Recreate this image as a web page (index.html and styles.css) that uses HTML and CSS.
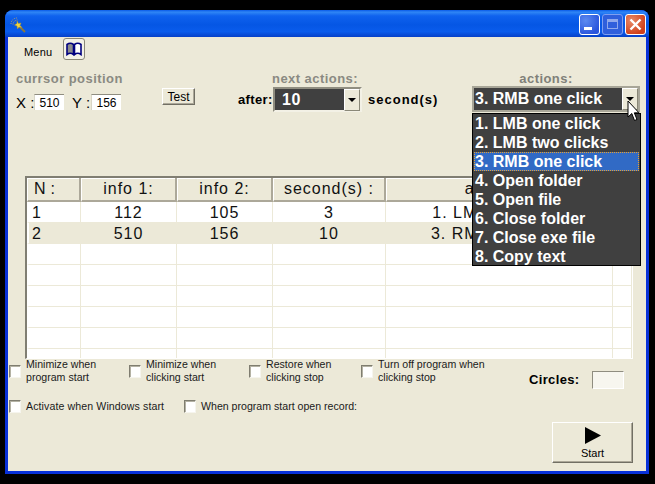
FILE: index.html
```html
<!DOCTYPE html>
<html lang="en">
<head>
<meta charset="utf-8">
<title>Clicker</title>
<link rel="stylesheet" href="styles.css">
</head>
<body>
<div class="window">
  <header class="titlebar">
    <svg class="app-icon" width="16" height="16" viewBox="0 0 16 16">
      <path d="M1 7A6 6 0 0 1 7 1M3 7.500A4.500 4.500 0 0 1 7.500 3" fill="none" stroke="#b9a16a" stroke-width="1" stroke-dasharray="1 1"/>
      <path d="M9 9L15 15" stroke="#8a7a40" stroke-width="2"/>
      <path d="M7 4L8.500 6.500L11 6L10 8.500L12 10.500L9 10L7.500 12L7 9L4.500 8L7 6.500Z" fill="#f2d640" stroke="#a89030" stroke-width=".5"/>
    </svg>
    <div class="caption-buttons">
      <div class="cap cap-min"><span class="min-glyph"></span></div>
      <div class="cap cap-max"><span class="max-glyph"></span></div>
      <div class="cap cap-close">
        <svg width="15" height="15" viewBox="0 0 15 15"><path d="M2.500 2.500L12.500 12.500M12.500 2.500L2.500 12.500" stroke="#fff" stroke-width="2.400"/></svg>
      </div>
    </div>
  </header>

  <main class="client">
    <div class="menu-row">
      <span class="menu-item">Menu</span>
      <div class="book-btn">
        <svg width="16" height="14" viewBox="0 0 16 14">
          <path d="M1 2.500C3 1 5.500 1 7.500 2.500V12.500C5.500 11 3 11 1 12.500Z" fill="#8c8c8c" stroke="#00007f" stroke-width="1.600"/>
          <path d="M8.500 2.500C10.500 1 13 1 15 2.500V12.500C13 11 10.500 11 8.500 12.500Z" fill="#fff" stroke="#00007f" stroke-width="1.600"/>
        </svg>
      </div>
    </div>

    <div class="control-row">
      <section class="position-group">
        <div class="group-label">currsor position</div>
        <div class="coords">
          <span class="coord-name">X :</span><span class="coord-value">510</span>
          <span class="coord-name coord-y">Y :</span><span class="coord-value">156</span>
        </div>
      </section>
      <button class="test-btn">Test</button>
      <section class="next-group">
        <div class="group-label next-label">next actions:</div>
        <div class="next-line">
          <span class="bold-label">after:</span>
          <div class="combo combo-next">
            <span class="combo-text">10</span>
            <span class="combo-btn"><i class="arrow"></i></span>
          </div>
          <span class="bold-label seconds">second(s)</span>
        </div>
      </section>
      <section class="actions-group">
        <div class="group-label actions-label">actions:</div>
        <div class="combo combo-actions">
          <span class="combo-text">3. RMB one click</span>
          <span class="combo-btn"><i class="arrow"></i></span>
        </div>
      </section>
    </div>

    <div class="table-frame">
      <table class="grid">
        <colgroup>
          <col class="c-n"><col class="c-i"><col class="c-i"><col class="c-s"><col class="c-a"><col class="c-e">
        </colgroup>
        <thead>
          <tr><th class="left">N :</th><th>info 1:</th><th>info 2:</th><th>second(s) :</th><th>actions :</th><th></th></tr>
        </thead>
        <tbody>
          <tr><td class="left">1</td><td>112</td><td>105</td><td>3</td><td>1. LMB one click</td><td></td></tr>
          <tr class="alt"><td class="left">2</td><td>510</td><td>156</td><td>10</td><td>3. RMB one click</td><td></td></tr>
          <tr><td></td><td></td><td></td><td></td><td></td><td></td></tr>
          <tr><td></td><td></td><td></td><td></td><td></td><td></td></tr>
          <tr><td></td><td></td><td></td><td></td><td></td><td></td></tr>
          <tr><td></td><td></td><td></td><td></td><td></td><td></td></tr>
          <tr><td></td><td></td><td></td><td></td><td></td><td></td></tr>
          <tr><td></td><td></td><td></td><td></td><td></td><td></td></tr>
        </tbody>
      </table>
    </div>

    <div class="options-row">
      <label class="opt opt-1"><span class="check"></span><span>Minimize when<br>program start</span></label>
      <label class="opt opt-2"><span class="check"></span><span>Minimize when<br>clicking start</span></label>
      <label class="opt opt-3"><span class="check"></span><span>Restore when<br>clicking stop</span></label>
      <label class="opt opt-4"><span class="check"></span><span>Turn off program when<br>clicking stop</span></label>
      <div class="circles"><span class="bold-label">Circles:</span><span class="circles-input"></span></div>
    </div>

    <div class="options-row-2">
      <label class="opt opt-5"><span class="check"></span><span>Activate when Windows start</span></label>
      <label class="opt"><span class="check"></span><span>When program start open record:</span></label>
    </div>

    <div class="start-row">
      <button class="start-btn">
        <svg width="16" height="17" viewBox="0 0 16 17"><path d="M0 0L16 8.500L0 17Z" fill="#000"/></svg>
        <span>Start</span>
      </button>
    </div>

    <ul class="dropdown">
      <li>1. LMB one click</li>
      <li>2. LMB two clicks</li>
      <li class="selected">3. RMB one click</li>
      <li>4. Open folder</li>
      <li>5. Open file</li>
      <li>6. Close folder</li>
      <li>7. Close exe file</li>
      <li>8. Copy text</li>
    </ul>
    <svg class="cursor" width="13" height="22" viewBox="0 0 13 22">
      <path d="M1 1V17L4.800 13.500L7.500 20.500L10 19.500L7.300 12.800H12Z" fill="#fff" stroke="#000" stroke-width="1"/>
    </svg>
  </main>
</div>
</body>
</html>
```

FILE: styles.css
```css
* { box-sizing: border-box; }

html, body {
  margin: 0;
  height: 100%;
  background: #000;
}

body {
  padding: 10px 6px 10px 5px;
  overflow: hidden;
  font-family: "Liberation Sans", Arial, sans-serif;
  color: #000;
}

.window {
  width: 644px;
  height: 464px;
  display: flex;
  flex-direction: column;
  background: #0831d9;
  border-radius: 8px 8px 0 0;
  overflow: hidden;
}

.titlebar {
  height: 27px;
  flex: none;
  display: flex;
  align-items: center;
  justify-content: space-between;
  padding: 0 3px 0 5px;
  background: linear-gradient(180deg, #0a5ae8 0%, #2f86f5 8%, #0f62ee 22%, #0556e4 55%, #0a5cec 80%, #0640c8 100%);
}

.app-icon { margin-top: 2px; }

.caption-buttons {
  display: flex;
  gap: 2px;
  margin-top: 1px;
}

.cap {
  width: 21px;
  height: 21px;
  border: 1px solid #fff;
  border-radius: 3px;
  position: relative;
  display: flex;
  align-items: center;
  justify-content: center;
}

.cap-min { background: radial-gradient(circle at 30% 30%, #5c8af0, #2a55dc 75%); }
.cap-max { background: #2f5fdc; border-color: #7f9ff0; }
.cap-close { background: radial-gradient(circle at 30% 30%, #e88a68, #d0401a 75%); }

.min-glyph {
  width: 8px;
  height: 3px;
  background: #fff;
  margin: 9px 4px 0 0;
}

.max-glyph {
  width: 11px;
  height: 10px;
  border: 1px solid #8fa8ec;
  border-top-width: 3px;
}

.client {
  position: relative;
  flex: 1;
  margin: 0 3px 3px;
  background: #ece9d8;
  display: flex;
  flex-direction: column;
}

.menu-row {
  height: 23px;
  display: flex;
  align-items: center;
  flex: none;
  padding-left: 16px;
  font-size: 11px;
}

.menu-item { margin-top: 6px; letter-spacing: .2px; }

.book-btn {
  width: 22px;
  height: 22px;
  margin: 1px 0 0 11px;
  border: 1px solid #8a8878;
  border-radius: 3px;
  background: #f3f1e6;
  display: flex;
  align-items: center;
  justify-content: center;
}

.control-row {
  display: flex;
  height: 105px;
  margin-top: 11px;
  padding-left: 8px;
  flex: none;
}

.group-label {
  font-size: 13px;
  font-weight: bold;
  color: #8a8a82;
  letter-spacing: .45px;
  line-height: 16px;
  height: 16px;
}

.position-group { width: 146px; flex: none; }

.coords {
  display: flex;
  align-items: center;
  margin-top: 7px;
  height: 16px;
}

.coord-name {
  font-size: 15px;
  width: 18px;
  flex: none;
  white-space: nowrap;
  padding-top: 1px;
}

.coord-y { width: 19px; margin-left: 8px; }

.coord-value {
  width: 30px;
  height: 16px;
  flex: none;
  background: #fff;
  border-top: 1px solid #8f8d80;
  border-left: 1px solid #d8d5c6;
  font-size: 12px;
  line-height: 16px;
  text-align: center;
}

.test-btn {
  width: 33px;
  height: 17px;
  margin: 17px 0 0 0;
  padding: 0;
  font: 12px/14px "Liberation Sans", Arial, sans-serif;
  color: #000;
  background: #ece9d8;
  border: 1px solid;
  border-color: #fff #716f64 #716f64 #fff;
  box-shadow: inset -1px -1px 0 #aca899;
}

.next-group {
  width: 223px;
  margin-left: 43px;
  flex: none;
}

.next-label {
  padding-left: 34px;
  letter-spacing: .45px;
}

.next-line {
  display: flex;
  align-items: center;
}

.bold-label {
  font-size: 13px;
  font-weight: bold;
  letter-spacing: .35px;
  white-space: nowrap;
}

.seconds { margin-left: 6px; letter-spacing: 1px; }

.next-line .bold-label:first-child { width: 35px; flex: none; }

.combo {
  display: flex;
  background: #404040;
  color: #fff;
  font-size: 16px;
  font-weight: bold;
  align-items: center;
  justify-content: space-between;
}

.combo-next {
  width: 89px;
  height: 25px;
  border: 2px solid;
  border-color: #f3f1e6;
  border-top-color: #8f8d80;
  border-left-color: #8f8d80;
  padding-left: 7px;
  letter-spacing: .5px;
}

.combo-actions {
  width: 168px;
  height: 26px;
  border: 2px solid #a8a698;
  padding-left: 1px;
}

.combo-btn {
  width: 16px;
  height: 22px;
  margin-right: 0;
  background: #ece9d8;
  border: 1px solid;
  border-color: #fff #8a8878 #8a8878 #fff;
  display: flex;
  align-items: center;
  justify-content: center;
  flex: none;
}

.arrow {
  width: 0;
  height: 0;
  border-left: 4px solid transparent;
  border-right: 4px solid transparent;
  border-top: 4px solid #000;
}

.actions-group {
  width: 168px;
  flex: none;
  margin-left: 11px;
}

.actions-label {
  text-align: center;
  height: 15px;
  padding-right: 20px;
  color: #808078;
}

.table-frame {
  height: 183px;
  width: 608px;
  margin-left: 17px;
  flex: none;
  overflow: hidden;
  background: #fff;
  border-style: solid;
  border-width: 2px 1px 1px 2px;
  border-color: #807e72 #fff #fff #807e72;
}

.grid {
  table-layout: fixed;
  border-collapse: separate;
  border-spacing: 0;
  width: 605px;
  font-size: 16px;
  letter-spacing: 1px;
  color: #111;
}

.c-n { width: 54px; }
.c-i { width: 96px; }
.c-s { width: 113px; }
.c-a { width: 227px; }
.c-e { width: 19px; }

.grid th {
  height: 24px;
  padding: 0;
  font-weight: normal;
  background: #ece9d8;
  border-right: 2px solid #aca899;
  border-bottom: 2px solid #aca899;
  border-left: 1px solid #fff;
  box-shadow: inset 0 1px 0 #fff;
  white-space: nowrap;
  overflow: hidden;
}

.grid td {
  height: 21px;
  padding: 1px 0 0;
  text-align: center;
  border-right: 1px solid #ece9d8;
  border-bottom: 1px solid #ece9d8;
  white-space: nowrap;
  overflow: hidden;
}

.grid .left { text-align: left; padding-left: 6px; }
.grid td.left { padding-left: 3px; }
.grid th.left { letter-spacing: .2px; }

.grid td:first-child { border-left: 2px solid #fff; }

.alt td { background: #ece9d8; }
.alt td:first-child { border-left-color: #fff; }

.options-row {
  display: flex;
  height: 26px;
  flex: none;
  margin-top: 1px;
  position: relative;
}

.opt {
  display: flex;
  align-items: center;
  gap: 5px;
  font-size: 10.6px;
  line-height: 13px;
  color: #1a1a1a;
  white-space: nowrap;
}

.options-row .opt { margin-top: -4px; }

.check {
  width: 12px;
  height: 13px;
  flex: none;
  background: #fff;
  border-style: solid;
  border-width: 1px;
  border-color: #7f7d70 #f6f5ee #f6f5ee #7f7d70;
  box-shadow: inset 1px 1px 0 #b4b2a4;
}

.opt-1 { width: 120px; margin-left: 1px; }
.opt-2 { width: 120px; }
.opt-3 { width: 112px; }
.opt-4 { width: 168px; }

.circles {
  display: flex;
  align-items: center;
  margin-top: 10px;
  height: 19px;
}

.circles-input {
  width: 32px;
  height: 18px;
  margin-left: 12px;
  background: #f7f6ef;
  border-style: solid;
  border-width: 1px;
  border-color: #8f8d80 #fff #fff #8f8d80;
}

.options-row-2 {
  display: flex;
  margin-top: 12px;
  height: 16px;
  flex: none;
}

.opt-5 { width: 175px; margin-left: 1px; }
.opt-5 span:last-child { letter-spacing: .1px; }

.start-row {
  display: flex;
  justify-content: flex-end;
  padding-right: 13px;
  margin-top: 8px;
  flex: none;
}

.start-btn {
  width: 81px;
  height: 41px;
  padding: 4px 0 0;
  display: flex;
  flex-direction: column;
  align-items: center;
  gap: 3px;
  font: 11px/13px "Liberation Sans", Arial, sans-serif;
  color: #000;
  background: #ece9d8;
  border: 1px solid;
  border-color: #fff #716f64 #716f64 #fff;
  box-shadow: inset -1px -1px 0 #aca899;
}

.dropdown {
  position: absolute;
  left: 464px;
  top: 76px;
  width: 169px;
  height: 153px;
  margin: 0;
  padding: 0 1px;
  list-style: none;
  background: #404040;
  border: 1px solid #000;
  color: #fff;
  font-size: 16px;
  font-weight: bold;
}

.dropdown li {
  height: 19px;
  line-height: 19px;
  padding-left: 1px;
  white-space: nowrap;
}

.dropdown .selected {
  background: #316ac5;
  outline: 1px dotted #e8a030;
  outline-offset: -1px;
}

.cursor {
  position: absolute;
  left: 619px;
  top: 63px;
}
```
